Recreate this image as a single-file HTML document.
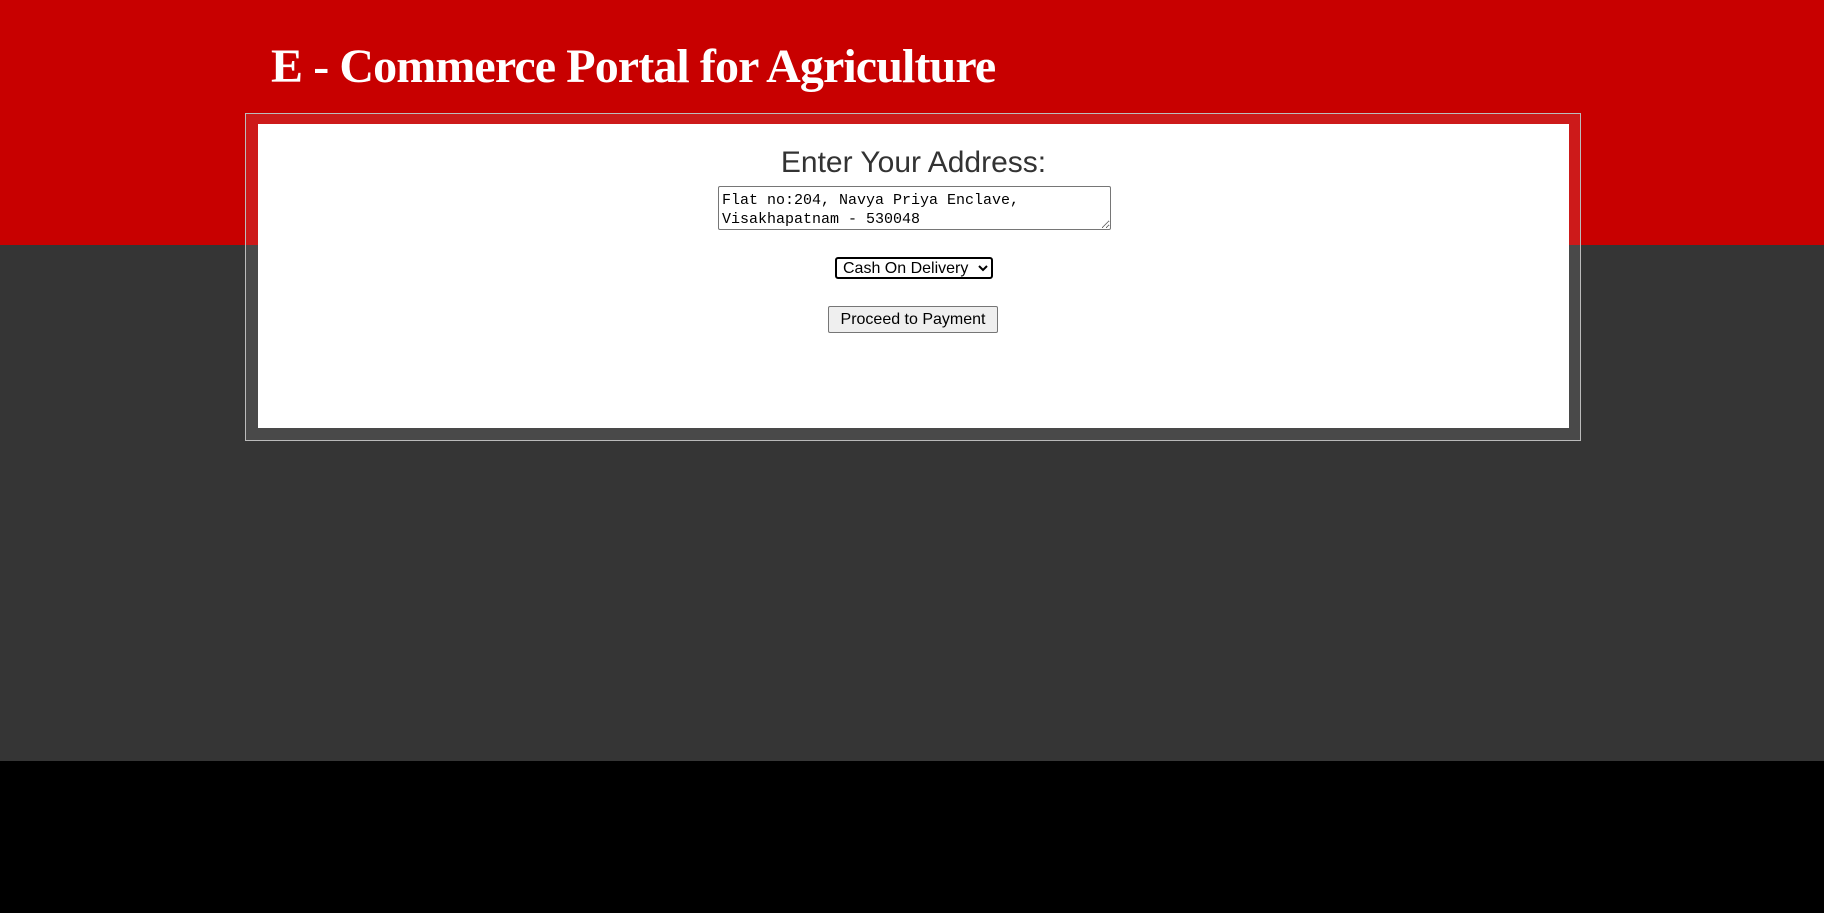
<!DOCTYPE html>
<html><head><meta charset="utf-8"><style>
html,body{margin:0;padding:0;width:1824px;height:913px;overflow:hidden;background:#000;font-family:"Liberation Sans",sans-serif}
.red{position:absolute;left:0;top:0;width:1824px;height:245px;background:#c80000}
.gray{position:absolute;left:0;top:245px;width:1824px;height:516px;background:#353535}
h1{position:absolute;left:271px;top:37px;margin:0;font-family:"Liberation Serif",serif;font-weight:bold;font-size:48px;letter-spacing:-0.9px;color:#fff;line-height:60px;white-space:nowrap}
.outer{position:absolute;left:245px;top:113px;width:1334px;height:326px;border:1px solid #bbb;background:rgba(255,255,255,0.1)}
.inner{position:absolute;left:258px;top:124px;width:1311px;height:304px;background:#fff}
.t{position:absolute;left:0;width:1311px;text-align:center;top:22px;font-size:30px;color:#333}
textarea{position:absolute;left:460px;top:62px;width:393px;height:44px;box-sizing:border-box;border:1px solid #767676;border-radius:2px;font-family:"Liberation Mono",monospace;font-size:15px;line-height:19px;padding:4px 3px 0;resize:both;color:#000}
select{position:absolute;left:577px;top:133px;width:158px;height:22px;font-size:16px;font-family:"Liberation Sans",sans-serif;border:2px solid #000;border-radius:3px;background:#fff;padding:0 2px}
button{position:absolute;left:570px;top:182px;width:170px;height:27px;font-size:16px;font-family:"Liberation Sans",sans-serif;border:1px solid #767676;border-radius:2px;background:#efefef;color:#000}
</style></head><body>
<div class="red"></div><div class="gray"></div>
<h1>E - Commerce Portal for Agriculture</h1>
<div class="outer"></div>
<div class="inner">
<div class="t">Enter Your Address:</div>
<textarea>Flat no:204, Navya Priya Enclave,
Visakhapatnam - 530048</textarea>
<select><option>Cash On Delivery</option></select>
<button>Proceed to Payment</button>
</div>
</body></html>
